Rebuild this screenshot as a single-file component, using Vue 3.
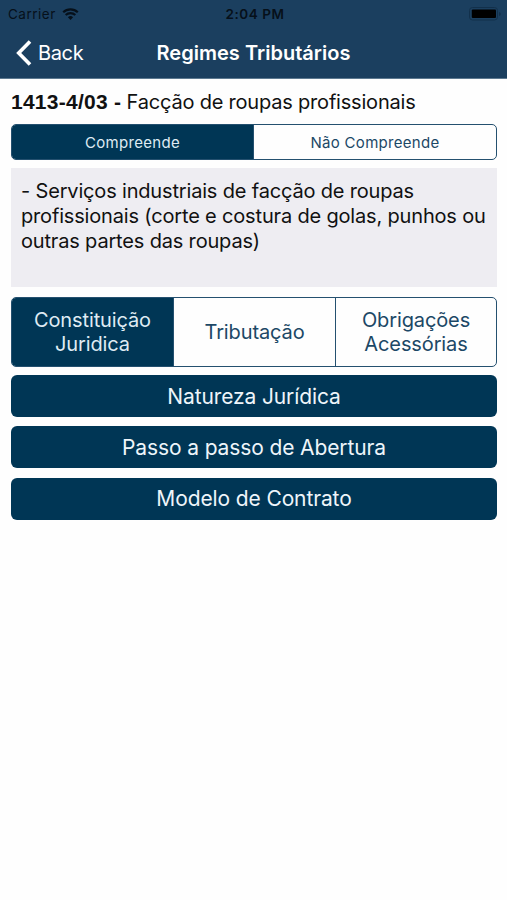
<template>
  <div class="screen">
    <header class="header">
      <div class="status-bar">
        <div class="carrier">
          <span>Carrier</span>
          <svg class="wifi" viewBox="0 0 17 12" width="17" height="12">
            <path d="M1.2 4.3a10.6 10.6 0 0 1 14.6 0" />
            <path d="M3.7 7a7 7 0 0 1 9.6 0" />
            <path class="wifi-dot" d="M8.5 12 5.9 9.3a3.8 3.8 0 0 1 5.2 0z" />
          </svg>
        </div>
        <span class="time">2:04 PM</span>
        <svg class="battery" viewBox="0 0 33 14" width="33" height="14">
          <rect class="battery-frame" x="0.5" y="0.5" width="28" height="12.5" rx="3" />
          <rect x="2.8" y="2.5" width="24.2" height="8.6" rx="1" />
          <path class="battery-cap" d="M30 5v4q1.800-.5 1.800-2T30 5z" />
        </svg>
      </div>
      <nav class="nav-bar">
        <button class="back">
          <svg viewBox="0 0 16 26" width="16" height="26">
            <path d="M14 1.500 2.700 13 14 24.500" />
          </svg>
          <span>Back</span>
        </button>
        <h1>Regimes Tributários</h1>
      </nav>
    </header>

    <main class="content">
      <p class="activity"><b>1413-4/03 -</b> <span>Facção de roupas profissionais</span></p>

      <div class="segmented">
        <button
          v-for="(item, i) in scopes"
          :key="item"
          :class="{ active: scope === i }"
          @click="scope = i"
        >{{ item }}</button>
      </div>

      <div class="description">- Serviços industriais de facção de roupas<br>profissionais (corte e costura de golas, punhos ou<br>outras partes das roupas)</div>

      <div class="segmented large">
        <button
          v-for="(item, i) in tabs"
          :key="item"
          :class="{ active: tab === i }"
          @click="tab = i"
        >{{ item }}</button>
      </div>

      <div class="actions">
        <button v-for="item in actions" :key="item">{{ item }}</button>
      </div>
    </main>
  </div>
</template>

<script setup>
import { ref } from 'vue'

const scope = ref(0)
const tab = ref(0)

const scopes = ['Compreende', 'Não Compreende']
const tabs = ['Constituição Juridica', 'Tributação', 'Obrigações Acessórias']
const actions = ['Natureza Jurídica', 'Passo a passo de Abertura', 'Modelo de Contrato']
</script>

<style>
body {
  background: #fff;
}
</style>

<style scoped>
.screen {
  min-height: 900px;
  background: #fefefe;
  color: #111;
  font-family: Inter, "Liberation Sans", sans-serif;
}

button {
  margin: 0;
  padding: 0;
  border: none;
  background: none;
  color: inherit;
  font: inherit;
  letter-spacing: inherit;
}

.header {
  box-sizing: border-box;
  height: 79px;
  background: #1b3f5f;
  border-bottom: 1px solid #5d7990;
}

.status-bar {
  display: grid;
  grid-template-columns: 1fr auto 1fr;
  align-items: center;
  height: 27px;
  padding: 0 5px 0 8px;
  color: #06101a;
  font-size: 13.5px;
}

.carrier {
  display: flex;
  align-items: center;
  gap: 6px;
  letter-spacing: 0.5px;
}

.wifi {
  fill: none;
  stroke: #06101a;
  stroke-width: 2.2;
}

.wifi .wifi-dot {
  fill: #06101a;
  stroke: none;
}

.time {
  font-weight: 600;
  letter-spacing: 0.55px;
}

.battery {
  justify-self: end;
  fill: #000;
}

.battery .battery-frame {
  fill: none;
  stroke: #12304b;
}

.battery .battery-cap {
  fill: #12304b;
}

.nav-bar {
  display: grid;
  grid-template-columns: 1fr auto 1fr;
  align-items: center;
  height: 51px;
  padding: 0 16px;
  color: #fff;
}

.back {
  display: flex;
  align-items: center;
  gap: 6px;
  font-size: 20px;
  letter-spacing: -0.35px;
}

.back svg {
  fill: none;
  stroke: #fff;
  stroke-width: 3.6;
}

.nav-bar h1 {
  margin: 0;
  font-size: 20px;
  font-weight: 600;
  letter-spacing: 0.02px;
}

.content {
  padding: 10px 10px 0 11px;
}

.activity {
  margin: 0 0 9px;
  font-size: 20px;
  letter-spacing: -0.2px;
  line-height: 26px;
  white-space: nowrap;
}

.activity b {
  font-family: "Liberation Sans", sans-serif;
  font-size: 21px;
  letter-spacing: 0.25px;
}

.segmented {
  box-sizing: border-box;
  display: grid;
  grid-template-columns: calc(50% - 1px) 1fr;
  height: 36px;
  overflow: hidden;
  border: 1px solid #24506f;
  border-radius: 5px;
  color: #1c4866;
  font-size: 15px;
  letter-spacing: 0.3px;
}

.segmented button + button {
  border-left: 1px solid #24506f;
}

.segmented .active {
  background: #003655;
  color: #dfebf3;
}

.description {
  box-sizing: border-box;
  height: 119px;
  margin: 8px 0 10px;
  padding: 11px 10px;
  background: #eeedf2;
  font-size: 20px;
  letter-spacing: -0.17px;
  line-height: 25px;
  white-space: nowrap;
}

.segmented.large {
  grid-template-columns: 161px 162px 1fr;
  height: 70px;
  font-size: 20px;
  letter-spacing: -0.12px;
  line-height: 24px;
}

.segmented.large button {
  padding: 0 20px;
}

.actions {
  display: grid;
  gap: 9.4px;
  margin-top: 8px;
}

.actions button {
  height: 42px;
  border-radius: 6px;
  background: #003655;
  color: #eef5fa;
  font-size: 21px;
  letter-spacing: -0.12px;
}
</style>
